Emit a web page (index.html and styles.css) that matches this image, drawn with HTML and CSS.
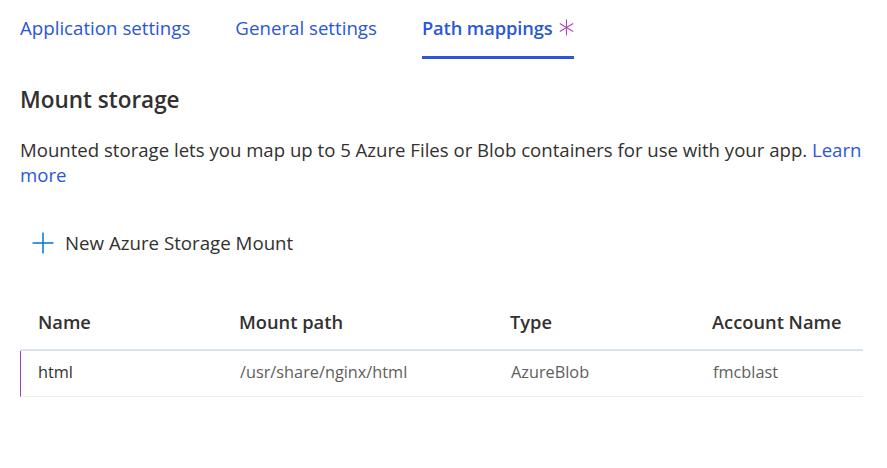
FILE: index.html
```html
<!DOCTYPE html>
<html>
<head>
<meta charset="utf-8">
<link rel="stylesheet" href="styles.css">
</head>
<body>
<div class="page">
  <nav class="tabs">
    <a class="tab">Application settings</a>
    <a class="tab">General settings</a>
    <a class="tab active">Path mappings<svg class="dirty" width="15" height="17" viewBox="0 0 15 17"><path d="M7.5 0.5v16M0.8 4.5l13.4 8M0.8 12.5l13.4-8" stroke="#b146c2" stroke-width="1.1" fill="none"/></svg></a>
  </nav>
  <h2 class="title">Mount storage</h2>
  <p class="desc">Mounted storage lets you map up to 5 Azure Files or Blob containers for use with your app. <a class="link">Learn more</a></p>
  <div class="toolbar">
    <button class="cmd">
      <svg class="plus" width="22" height="22" viewBox="0 0 22 22"><path d="M11 0.5v21M0.5 11h21" stroke="#0078d4" stroke-width="1.5" fill="none"/></svg>
      <span>New Azure Storage Mount</span>
    </button>
  </div>
  <div class="grid">
    <div class="row head">
      <div class="c">Name</div>
      <div class="c">Mount path</div>
      <div class="c">Type</div>
      <div class="c">Account Name</div>
    </div>
    <div class="row item">
      <div class="c primary">html</div>
      <div class="c">/usr/share/nginx/html</div>
      <div class="c">AzureBlob</div>
      <div class="c">fmcblast</div>
    </div>
  </div>
</div>
</body>
</html>
```
FILE: styles.css
```css
* { box-sizing: border-box; }
html, body { margin: 0; padding: 0; background: #fff; }
body { font-family: "Open Sans", "Noto Sans", sans-serif; color: #323130; }
.page { padding: 0 24px 0 20px; width: 887px; }
.tabs { display: flex; gap: 45px; height: 59px; align-items: flex-start; }
.tab { font-size: 18.7px; color: #2a56d9; padding-top: 15px; height: 59px; line-height: 26px; white-space: nowrap; }
.tab.active { display: flex; align-items: center; height: 59px; padding-top: 0; padding-bottom: 3px; font-weight: 600; font-size: 18.3px; border-bottom: 3px solid #2a56d9; letter-spacing: -0.1px; }
.tab.active { padding-top: 0; align-items: flex-start; }
.tab.active { padding-top: 15px; }
.dirty { margin: 4px 0 0 6px; flex: none; }
.title { margin: 26px 0 0; font-size: 22.5px; font-weight: 600; line-height: 30px; }
.desc { margin: 22px 0 0; font-size: 18.6px; line-height: 25px; }
.link { color: #2a56d9; }
.toolbar { margin-top: 45px; padding-left: 12px; }
.cmd { display: flex; align-items: center; gap: 11px; background: none; border: 0; padding: 0; font: inherit; font-size: 18.7px; line-height: 22px; color: #323130; }
.grid { margin-top: 39px; width: 843px; }
.row { display: grid; grid-template-columns: 201px 271px 202px 1fr; }
.c { padding-left: 18px; white-space: nowrap; }
.head { height: 58px; align-items: center; font-weight: 600; font-size: 18.3px; border-bottom: 2px solid #dbe3ea; }
.item { height: 46px; align-items: center; padding-bottom: 4px; font-size: 16.3px; color: #605e5c; border-bottom: 1px solid #f0efee; border-left: 1px solid #9b3fc0; }
.item .c:first-child { padding-left: 17px; }
.primary { color: #323130; }
```
